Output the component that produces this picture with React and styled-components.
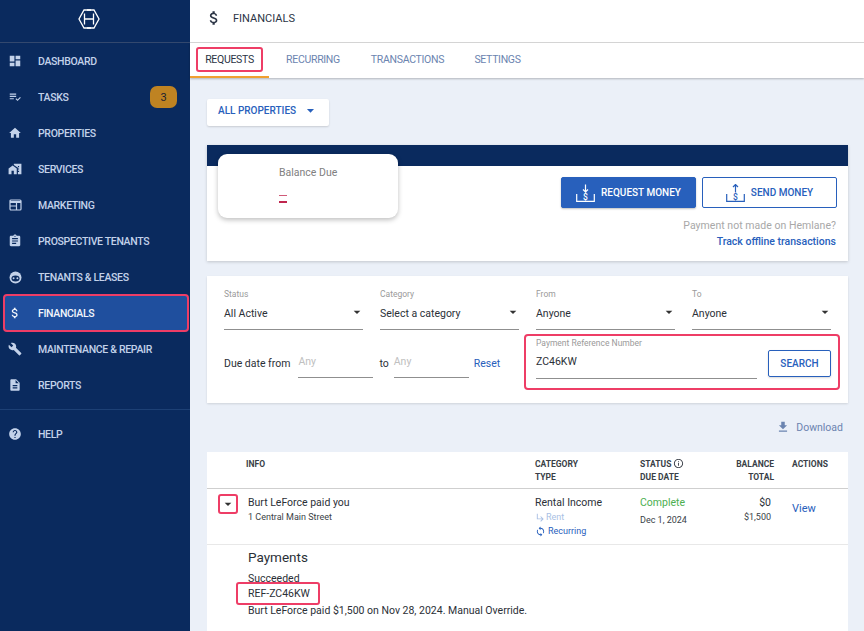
import styled, { createGlobalStyle } from 'styled-components';
import {
  MdDashboard,
  MdPlaylistAddCheck,
  MdHome,
  MdHomeWork,
  MdAssignment,
  MdAttachMoney,
  MdBuild,
  MdDescription,
  MdHelp,
  MdArrowDropDown,
  MdFileDownload,
  MdInfoOutline,
  MdSync,
  MdSubdirectoryArrowRight,
} from 'react-icons/md';

const FONT = '"Roboto", "Noto Sans", Arial, sans-serif';
const NAVY = '#0a2a5e';
const BLUE = '#2860bc';
const RED = '#ee3d66';

const GlobalStyle = createGlobalStyle`
  html, body {
    margin: 0;
    height: 100%;
    overflow: hidden;
    background: #ebf0f8;
    font-family: ${FONT};
  }
  * { box-sizing: border-box; }
`;

const Page = styled.div`
  display: flex;
  width: 864px;
  height: 631px;
  overflow: hidden;
`;

const Sidebar = styled.aside`
  width: 190px;
  flex: none;
  background: ${NAVY};
  display: flex;
  flex-direction: column;
`;

const LogoBar = styled.div`
  height: 43px;
  flex: none;
  display: flex;
  align-items: center;
  justify-content: center;
  border-bottom: 1px solid #33486e;
  padding: 0 13px 5px 0;
`;

const NavList = styled.nav`
  display: flex;
  flex-direction: column;
  padding-bottom: 6px;
  border-bottom: 1px solid #1d4075;
`;

const NavItem = styled.div`
  display: flex;
  align-items: center;
  margin: ${(p) => (p.$active ? '-1px 1px -1px 3px' : '0')};
  height: ${(p) => (p.$active ? '38px' : '36px')};
  padding-left: ${(p) => (p.$active ? '3px' : '8px')};
  background: ${(p) => (p.$active ? '#1f4f9e' : 'transparent')};
  border: ${(p) => (p.$active ? `2px solid ${RED}` : 'none')};
  border-radius: ${(p) => (p.$active ? '4px' : '0')};
  color: ${(p) => (p.$active ? '#f2f6fc' : '#c3d2ea')};
`;

const NavIcon = styled.span`
  width: 14px;
  height: 14px;
  flex: none;
  display: flex;
  align-items: center;
  justify-content: center;
  font-size: 14px;
  color: inherit;
`;

const NavLabel = styled.span`
  margin-left: 16px;
  font-size: 10.5px;
  font-weight: 500;
  letter-spacing: -0.33px;
  white-space: nowrap;
`;

const Badge = styled.span`
  margin-left: auto;
  margin-right: 13px;
  width: 27px;
  height: 22px;
  border-radius: 7px;
  background: #bf8322;
  color: #1d2230;
  font-size: 11px;
  display: flex;
  align-items: center;
  justify-content: center;
`;

const HelpBlock = styled.div`
  padding-top: 6px;
`;

const Main = styled.main`
  flex: 1;
  min-width: 0;
  display: flex;
  flex-direction: column;
`;

const TitleBar = styled.header`
  height: 43px;
  flex: none;
  background: #fff;
  display: flex;
  align-items: center;
  padding: 0 0 6px 15px;
  gap: 10px;
  color: #2b3445;
  border-bottom: 1px solid #d8d8d8;
  font-size: 11px;
  svg { font-size: 18px; }
`;

const TabBar = styled.div`
  height: 35px;
  flex: none;
  background: #fff;
  display: flex;
  align-items: stretch;
  box-shadow: 0 1px 2px rgba(0, 0, 0, 0.25);
`;

const Tab = styled.div`
  width: ${(p) => p.$width}px;
  flex: none;
  display: flex;
  align-items: center;
  justify-content: center;
  font-size: 10.5px;
  letter-spacing: -0.3px;
  padding-bottom: 1px;
  color: ${(p) => (p.$active ? '#2b3445' : '#6b84b0')};
  border-bottom: 2px solid ${(p) => (p.$active ? '#f0a030' : 'transparent')};
`;

const Boxed = styled.span`
  display: inline-flex;
  align-items: center;
  border: 2px solid ${RED};
  border-radius: 3px;
`;

const TabBox = styled(Boxed)`
  width: 67px;
  height: 25px;
  justify-content: center;
`;

const Content = styled.div`
  flex: 1;
  min-height: 0;
  padding: 21px 16px 0 17px;
  display: flex;
  flex-direction: column;
`;

const PropertyButton = styled.div`
  width: 122px;
  height: 27px;
  flex: none;
  background: #fff;
  border-radius: 2px;
  box-shadow: 0 1px 2px rgba(0, 0, 0, 0.15);
  color: ${BLUE};
  font-size: 10px;
  font-weight: 500;
  display: flex;
  align-items: center;
  padding: 0 0 4px 11px;
  svg { font-size: 17px; margin-left: 6px; }
`;

const BalanceCard = styled.section`
  margin-top: 19px;
  height: 116px;
  flex: none;
  background: #fff;
  box-shadow: 0 1px 3px rgba(0, 0, 0, 0.18);
  border-top: 21px solid ${NAVY};
  display: flex;
  justify-content: space-between;
  padding: 11px 11px 0;
`;

const BalanceBox = styled.div`
  width: 180px;
  height: 64px;
  margin-top: -23px;
  background: #fff;
  border-radius: 9px;
  box-shadow: 0 2px 5px rgba(0, 0, 0, 0.25);
  padding: 12px 0 0 61px;
  color: #808080;
  font-size: 10.5px;
`;

const BalanceDash = styled.div`
  width: 8px;
  margin-top: 16px;
  height: 8px;
  border-top: 1px solid #d05a78;
  border-bottom: 2px solid #c0264e;
`;

const ActionColumn = styled.div`
  display: flex;
  flex-direction: column;
  align-items: flex-end;
`;

const ButtonRow = styled.div`
  display: flex;
  gap: 6px;
`;

const MoneyButton = styled.div`
  width: 135px;
  height: 31px;
  border-radius: 2px;
  border: 1px solid ${BLUE};
  background: ${(p) => (p.$filled ? BLUE : '#fff')};
  color: ${(p) => (p.$filled ? '#fff' : BLUE)};
  box-shadow: ${(p) => (p.$filled ? '0 1px 2px rgba(0,0,0,0.25)' : 'none')};
  font-size: 10px;
  font-weight: 500;
  display: flex;
  align-items: center;
  justify-content: center;
  gap: 6px;
`;

const OfflineNote = styled.div`
  margin: 11px 1px 0 0;
  font-size: 10.5px;
  letter-spacing: 0.03px;
  color: #a8a8a8;
`;

const OfflineLink = styled.div`
  margin: 3px 1px 0 0;
  font-size: 10.5px;
  font-weight: 500;
  color: ${BLUE};
`;

const FilterCard = styled.section`
  margin-top: 15px;
  height: 127px;
  flex: none;
  background: #fff;
  box-shadow: 0 1px 2px rgba(0, 0, 0, 0.12);
  padding: 14px 17px 0;
  display: grid;
  grid-template-columns: repeat(4, 139px);
  column-gap: 17px;
  grid-template-rows: 40px 1fr;
`;

const Field = styled.div`
  border-bottom: 1px solid #8f8f8f;
  display: flex;
  flex-direction: column;
`;

const FieldLabel = styled.div`
  font-size: 8.5px;
  line-height: 9px;
  color: #9a9a9a;
`;

const FieldValue = styled.div`
  margin-top: 7px;
  font-size: 10.5px;
  color: #2b3037;
  display: flex;
  justify-content: space-between;
  align-items: center;
  svg { font-size: 16px; margin-right: -2px; color: #333; margin-top: -2px; }
`;

const DateRow = styled.div`
  grid-column: 1 / 3;
  display: flex;
  align-items: flex-start;
  padding-top: 26px;
  font-size: 10.5px;
  color: #2b3037;
`;

const DateLabel = styled.span`
  margin-top: 1px;
  white-space: nowrap;
  margin-right: ${(p) => p.$trail}px;
  margin-left: ${(p) => p.$lead || 0}px;
`;

const DateInput = styled.div`
  width: 75px;
  height: 22px;
  border-bottom: 1px solid #8f8f8f;
  color: #c0c0c0;
  font-size: 10.5px;
  line-height: 12px;
`;

const ResetLink = styled.span`
  margin: 1px 0 0 5px;
  color: ${BLUE};
`;

const ReferenceBox = styled.div`
  grid-column: 3 / 5;
  margin: 4px -9px 13px -12px;
  border: 2px solid ${RED};
  border-radius: 4px;
  padding: 3px 7px 0 10px;
  display: flex;
  align-items: flex-start;
`;

const ReferenceField = styled(Field)`
  width: 221px;
  height: 40px;
  flex: none;
`;

const ReferenceValue = styled(FieldValue)`
  margin-top: 7px;
`;

const SearchButton = styled.div`
  margin: 11px 0 0 11px;
  width: 63px;
  height: 27px;
  border: 1px solid ${BLUE};
  border-radius: 2px;
  color: ${BLUE};
  font-size: 10px;
  font-weight: 500;
  display: flex;
  align-items: center;
  justify-content: center;
  box-shadow: 0 1px 2px rgba(0, 0, 0, 0.15);
`;

const DownloadRow = styled.div`
  height: 49px;
  flex: none;
  display: flex;
  align-items: center;
  justify-content: flex-end;
  padding: 0 5px 1px 0;
  gap: 6px;
  font-size: 10.5px;
  color: #6b84b0;
  svg { font-size: 14px; }
`;

const TableCard = styled.section`
  flex: 1;
  background: #fff;
`;

const TableRow = styled.div`
  display: grid;
  grid-template-columns: 39px 289px 105px 90px 44px 74px;
  height: ${(p) => p.$height}px;
  border-bottom: ${(p) => p.$line};
`;

const HeadCell = styled.div`
  padding-top: 6px;
  font-size: 8.5px;
  font-weight: 700;
  line-height: 13px;
  color: #3a3f47;
  text-align: ${(p) => (p.$right ? 'right' : 'left')};
  padding-left: ${(p) => (p.$indent ? '18px' : '0')};
  svg { font-size: 11px; vertical-align: -2px; margin-left: 2px; }
`;

const CaretBox = styled(Boxed)`
  width: 20px;
  height: 20px;
  margin: 5px 0 0 11px;
  justify-content: center;
  font-size: 16px;
  color: #333;
`;

const Cell = styled.div`
  padding-top: ${(p) => p.$top || 7}px;
  padding-left: ${(p) => p.$left || 0}px;
  padding-right: ${(p) => p.$rightPad || 0}px;
  text-align: ${(p) => (p.$right ? 'right' : 'left')};
`;

const PrimaryLine = styled.div`
  font-size: 10.5px;
  line-height: 13px;
  color: ${(p) => p.$color || '#2b3037'};
`;

const SecondaryLine = styled.div`
  margin-top: ${(p) => p.$top || 2}px;
  font-size: 9px;
  line-height: 12px;
  color: ${(p) => p.$color || '#3a3f47'};
  display: flex;
  align-items: center;
  justify-content: ${(p) => (p.$right ? 'flex-end' : 'flex-start')};
  svg { font-size: 11px; margin-right: ${(p) => p.$iconGap ?? 2}px; }
`;

const ViewLink = styled.div`
  font-size: 11px;
  color: ${BLUE};
`;

const PaymentsBlock = styled.div`
  padding: 4px 0 0 41px;
  color: #2b3037;
  font-size: 10.5px;
`;

const PaymentsTitle = styled.div`
  font-size: 13.5px;
  line-height: 16px;
  margin-bottom: 6px;
`;

const PaymentLine = styled.div`
  line-height: 15px;
`;

const RefBox = styled(Boxed)`
  display: flex;
  width: 84px;
  height: 23px;
  margin: -4px 0 -2px -12px;
  padding-left: 10px;
`;

const navItems = [
  { label: 'DASHBOARD', icon: MdDashboard },
  { label: 'TASKS', icon: MdPlaylistAddCheck, badge: 3 },
  { label: 'PROPERTIES', icon: MdHome },
  { label: 'SERVICES', icon: MdHomeWork },
  { label: 'MARKETING', icon: MarketingIcon },
  { label: 'PROSPECTIVE TENANTS', icon: MdAssignment },
  { label: 'TENANTS & LEASES', icon: TenantIcon },
  { label: 'FINANCIALS', icon: MdAttachMoney, active: true },
  { label: 'MAINTENANCE & REPAIR', icon: MdBuild },
  { label: 'REPORTS', icon: MdDescription },
];

const tabs = [
  { label: 'REQUESTS', width: 79, active: true },
  { label: 'RECURRING', width: 88 },
  { label: 'TRANSACTIONS', width: 101 },
  { label: 'SETTINGS', width: 79 },
];

const filters = [
  { label: 'Status', value: 'All Active' },
  { label: 'Category', value: 'Select a category' },
  { label: 'From', value: 'Anyone' },
  { label: 'To', value: 'Anyone' },
];

function Logo() {
  return (
    <svg width="22" height="20" viewBox="0 0 22 20" fill="none" stroke="#fff" strokeWidth="1.3">
      <path d="M13 1H6L1 10l5 9h7" />
      <path d="M9 1h7l5 9-5 9H9" />
      <path d="M6.500 4.500v11M15.500 4.500v11M6.500 10h9" />
    </svg>
  );
}

function MarketingIcon() {
  return (
    <svg width="13" height="12" viewBox="0 0 13 12" fill="none" stroke="currentColor" strokeWidth="1.2">
      <rect x="1" y="1" width="11" height="10" rx="1" />
      <path d="M1 3h11" strokeWidth="2" />
      <path d="M1 7h6.500M7.500 4v7" />
    </svg>
  );
}

function TenantIcon() {
  return (
    <svg width="13" height="13" viewBox="0 0 24 24">
      <circle cx="12" cy="12" r="11" fill="currentColor" />
      <ellipse cx="12" cy="14" rx="7.500" ry="5.500" fill="#0a2a5e" />
      <circle cx="8.500" cy="13.500" r="1.800" fill="currentColor" />
      <circle cx="15.500" cy="13.500" r="1.800" fill="currentColor" />
    </svg>
  );
}

function MoneyIcon({ up }) {
  return (
    <svg width="19" height="18" viewBox="0 0 19 18" fill="none" stroke="currentColor" strokeWidth="1.2">
      <path d="M.7 10v7.300h17.600V10" />
      <path d={up ? 'M9.500 8V.5M7 3 9.500.5 12 3' : 'M9.500.5V8M7 5.500 9.500 8 12 5.500'} />
      <text x="9.500" y="16" textAnchor="middle" fontSize="8.500" fill="currentColor" stroke="none">$</text>
    </svg>
  );
}

export default function App() {
  return (
    <Page>
      <GlobalStyle />
      <Sidebar>
        <LogoBar>
          <Logo />
        </LogoBar>
        <NavList>
          {navItems.map(({ label, icon: Icon, badge, active }) => (
            <NavItem key={label} $active={active}>
              <NavIcon>
                <Icon />
              </NavIcon>
              <NavLabel>{label}</NavLabel>
              {badge && <Badge>{badge}</Badge>}
            </NavItem>
          ))}
        </NavList>
        <HelpBlock>
          <NavItem>
            <NavIcon>
              <MdHelp />
            </NavIcon>
            <NavLabel>HELP</NavLabel>
          </NavItem>
        </HelpBlock>
      </Sidebar>

      <Main>
        <TitleBar>
          <MdAttachMoney />
          FINANCIALS
        </TitleBar>
        <TabBar>
          {tabs.map((tab) => (
            <Tab key={tab.label} $width={tab.width} $active={tab.active}>
              {tab.active ? <TabBox>{tab.label}</TabBox> : tab.label}
            </Tab>
          ))}
        </TabBar>

        <Content>
          <PropertyButton>
            ALL PROPERTIES
            <MdArrowDropDown />
          </PropertyButton>

          <BalanceCard>
            <BalanceBox>
              Balance Due
              <BalanceDash />
            </BalanceBox>
            <ActionColumn>
              <ButtonRow>
                <MoneyButton $filled>
                  <MoneyIcon />
                  REQUEST MONEY
                </MoneyButton>
                <MoneyButton>
                  <MoneyIcon up />
                  SEND MONEY
                </MoneyButton>
              </ButtonRow>
              <OfflineNote>Payment not made on Hemlane?</OfflineNote>
              <OfflineLink>Track offline transactions</OfflineLink>
            </ActionColumn>
          </BalanceCard>

          <FilterCard>
            {filters.map((f) => (
              <Field key={f.label}>
                <FieldLabel>{f.label}</FieldLabel>
                <FieldValue>
                  {f.value}
                  <MdArrowDropDown />
                </FieldValue>
              </Field>
            ))}
            <DateRow>
              <DateLabel $trail={8}>Due date from</DateLabel>
              <DateInput>Any</DateInput>
              <DateLabel $lead={6} $trail={5}>to</DateLabel>
              <DateInput>Any</DateInput>
              <ResetLink>Reset</ResetLink>
            </DateRow>
            <ReferenceBox>
              <ReferenceField>
                <FieldLabel>Payment Reference Number</FieldLabel>
                <ReferenceValue>ZC46KW</ReferenceValue>
              </ReferenceField>
              <SearchButton>SEARCH</SearchButton>
            </ReferenceBox>
          </FilterCard>

          <DownloadRow>
            <MdFileDownload />
            Download
          </DownloadRow>

          <TableCard>
            <TableRow $height={37} $line="1px solid #cfcfcf">
              <div />
              <HeadCell>INFO</HeadCell>
              <HeadCell>
                CATEGORY
                <br />
                TYPE
              </HeadCell>
              <HeadCell>
                STATUS
                <MdInfoOutline />
                <br />
                DUE DATE
              </HeadCell>
              <HeadCell $right>
                BALANCE
                <br />
                TOTAL
              </HeadCell>
              <HeadCell $indent>ACTIONS</HeadCell>
            </TableRow>
            <TableRow $height={56} $line="1px solid #e8e8e8">
              <div>
                <CaretBox>
                  <MdArrowDropDown />
                </CaretBox>
              </div>
              <Cell $left={2}>
                <PrimaryLine>Burt LeForce paid you</PrimaryLine>
                <SecondaryLine>1 Central Main Street</SecondaryLine>
              </Cell>
              <Cell>
                <PrimaryLine>Rental Income</PrimaryLine>
                <SecondaryLine $color="#a9bfe4" $iconGap={0}>
                  <MdSubdirectoryArrowRight />
                  Rent
                </SecondaryLine>
                <SecondaryLine $color={BLUE}>
                  <MdSync />
                  Recurring
                </SecondaryLine>
              </Cell>
              <Cell>
                <PrimaryLine $color="#4caf50">Complete</PrimaryLine>
                <SecondaryLine $top={5}>Dec 1, 2024</SecondaryLine>
              </Cell>
              <Cell $right $rightPad={3}>
                <PrimaryLine>$0</PrimaryLine>
                <SecondaryLine $right>$1,500</SecondaryLine>
              </Cell>
              <Cell $left={18} $top={13}>
                <ViewLink>View</ViewLink>
              </Cell>
            </TableRow>
            <PaymentsBlock>
              <PaymentsTitle>Payments</PaymentsTitle>
              <PaymentLine>Succeeded</PaymentLine>
              <PaymentLine>
                <RefBox>REF-ZC46KW</RefBox>
              </PaymentLine>
              <PaymentLine>Burt LeForce paid $1,500 on Nov 28, 2024. Manual Override.</PaymentLine>
            </PaymentsBlock>
          </TableCard>
        </Content>
      </Main>
    </Page>
  );
}
